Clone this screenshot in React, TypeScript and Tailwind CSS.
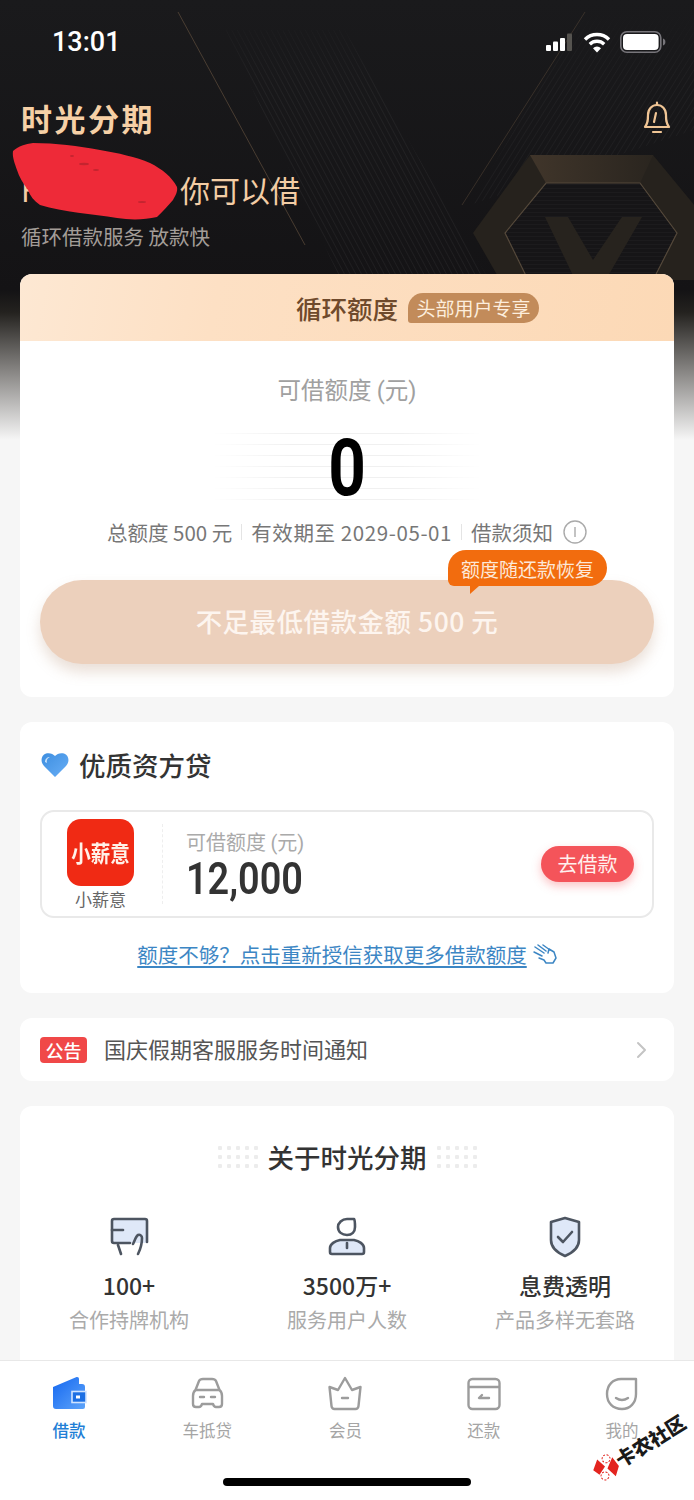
import React from "react";

const cjk = "font-['Noto_Sans_CJK_SC','Noto_Sans',sans-serif]";
const din = "font-['Roboto','Noto_Sans_CJK_SC',sans-serif]";

const StatusIcons = () => (
  <div className="flex items-center gap-[9px]">
    <svg width="28" height="18" viewBox="0 0 28 18">
      <rect x="0" y="12" width="5" height="6" rx="1" fill="#fff" />
      <rect x="7" y="8.5" width="5" height="9.5" rx="1" fill="#fff" />
      <rect x="14" y="5" width="5" height="13" rx="1" fill="#fff" />
      <rect x="21" y="0.5" width="5" height="17.5" rx="1" fill="#55534f" />
    </svg>
    <svg width="28" height="21" viewBox="0 0 28 21" fill="none" stroke="#fff" strokeWidth="3.4" strokeLinecap="butt">
      <path d="M2 7.5a17 17 0 0 1 24 0" />
      <path d="M6.8 12.2a10.4 10.4 0 0 1 14.4 0" />
      <path d="M14 20.5l-4-4.2a5.6 5.6 0 0 1 8 0z" fill="#fff" stroke="none" />
    </svg>
    <svg width="46" height="22" viewBox="0 0 46 22">
      <rect x="0.8" y="0.8" width="40" height="20.4" rx="6" fill="none" stroke="#77757a" strokeWidth="1.6" />
      <rect x="3" y="3" width="35.6" height="16" rx="4" fill="#fff" />
      <path d="M43 7.5c1.5.5 2.4 1.9 2.4 3.5s-.9 3-2.400 3.500z" fill="#77757a" />
    </svg>
  </div>
);

// diagonal hatching and the embossed hexagon badge behind the greeting
const HeaderArt = () => (
  <svg className="absolute left-0 top-0" width="694" height="290" viewBox="0 0 694 290" fill="none">
    <defs>
      <pattern id="hatch" width="5" height="5" patternUnits="userSpaceOnUse" patternTransform="rotate(-28)">
        <line x1="0" y1="0" x2="0" y2="5" stroke="#ffffff" strokeOpacity="0.09" strokeWidth="1" />
      </pattern>
      <pattern id="hatch2" width="5" height="5" patternUnits="userSpaceOnUse" patternTransform="rotate(32)">
        <line x1="0" y1="0" x2="0" y2="5" stroke="#ffffff" strokeOpacity="0.07" strokeWidth="1" />
      </pattern>
      <pattern id="bars" width="6" height="4" patternUnits="userSpaceOnUse">
        <line x1="0" y1="0" x2="6" y2="0" stroke="#ffffff" strokeOpacity="0.05" strokeWidth="1" />
      </pattern>
      <linearGradient id="fadeTop" x1="0" y1="0" x2="0" y2="1">
        <stop offset="0" stopColor="#fff" stopOpacity="0" />
        <stop offset="0.3" stopColor="#fff" stopOpacity="1" />
        <stop offset="1" stopColor="#fff" stopOpacity="1" />
      </linearGradient>
      <mask id="fade">
        <rect width="694" height="290" fill="url(#fadeTop)" />
      </mask>
      <linearGradient id="facet" x1="0" y1="0" x2="1" y2="0">
        <stop offset="0" stopColor="#40352a" />
        <stop offset="1" stopColor="#2a251f" />
      </linearGradient>
    </defs>
    <g mask="url(#fade)">
      <polygon points="225,30 345,30 495,290 345,290" fill="url(#hatch)" />
      <polygon points="585,10 694,10 694,130 470,205" fill="url(#hatch2)" />
    </g>
    <line x1="178" y1="12" x2="305" y2="245" stroke="#6a5642" strokeOpacity="0.6" />
    <line x1="585" y1="12" x2="462" y2="205" stroke="#6a5642" strokeOpacity="0.4" />
    <path d="M530 155H653L705 218L694 280H500L473 233z" fill="#26221d" />
    <path d="M530 155H653L640 183H546z" fill="url(#facet)" />
    <path d="M546 183H640L677 233L648 290H533L505 233z" fill="#161517" stroke="#54483a" strokeWidth="1.2" />
    <path d="M546 183H640L677 233L648 290H533L505 233z" fill="url(#bars)" />
    <path d="M545 217H568L593 260L622 217H642L600 290H580z" fill="#27231e" />
  </svg>
);

const Scribble = () => (
  <svg className="absolute left-[12px] top-[-30px]" width="172" height="84" viewBox="0 0 172 84">
    <path
      d="M1 11 C7 6 13 4 21 3 C44 3 66 6 88 10 C106 13 124 17 138 23 C150 29 160 37 165 47 C166 52 163 56 161 60 C156 66 151 71 145 77 C132 80 118 80 105 78 C80 74 52 72 28 65 C22 61 18 56 16 50 C11 43 7 37 5 30 C3 24 0 17 1 11z"
      fill="#ee2a38"
    />
    <g fill="#b3222c" opacity="0.7">
      <ellipse cx="72" cy="24" rx="5" ry="1.200" />
      <ellipse cx="84" cy="30" rx="3" ry="1" />
      <ellipse cx="60" cy="16" rx="2" ry="1" />
      <ellipse cx="130" cy="62" rx="4" ry="1" />
    </g>
  </svg>
);

const WalletIcon = () => (
  <svg width="36" height="36" viewBox="0 0 36 36">
    <defs>
      <linearGradient id="wallet" x1="0" y1="0" x2="1" y2="1">
        <stop offset="0" stopColor="#1467f0" />
        <stop offset="1" stopColor="#5ea4fa" />
      </linearGradient>
    </defs>
    <path d="M2 11 L25 1.200 C27 .6 28 1.500 28 3 V8 H31 A3 3 0 0 1 34 11 V31 A2 2 0 0 1 32 33 H5 A3 3 0 0 1 2 30z" fill="url(#wallet)" />
    <rect x="21" y="15.500" width="14" height="11" fill="#1c6fe4" stroke="#cfe3ff" strokeWidth="1.600" />
    <rect x="25" y="19.500" width="4" height="3" fill="#fff" />
  </svg>
);

const stroke = { fill: "none", stroke: "#9c9c9c", strokeWidth: 2.4, strokeLinecap: "round", strokeLinejoin: "round" } as const;

const CarIcon = () => (
  <svg width="36" height="36" viewBox="0 0 36 36" {...stroke}>
    <path d="M6.500 14 L10 5 Q11 3 14 3 H23 Q26 3 27 5 L30.500 14 Q33 16 33 20 V28 Q33 31 30 31 H27 Q25 31 24 28 H13 Q12 31 10 31 H7 Q4 31 4 28 V20 Q4 16 6.500 14z" />
    <path d="M7 14 H30" />
    <path d="M11 21 H15 M22 21 H26" />
  </svg>
);

const BasketIcon = () => (
  <svg width="36" height="36" viewBox="0 0 36 36" {...stroke}>
    <path d="M2.500 11 L11 14 L18 2 L25 14 L33.500 11 L31.500 30 A3 3 0 0 1 28.500 33 H7.500 A3 3 0 0 1 4.500 30z" />
    <path d="M15 22 h6" />
  </svg>
);

const RepayIcon = () => (
  <svg width="36" height="36" viewBox="0 0 36 36" {...stroke}>
    <rect x="2.500" y="3" width="31" height="30" rx="4" />
    <path d="M3 11 h30" />
    <path d="M16 19 l-3 3 h10" />
  </svg>
);

const MineIcon = () => (
  <svg width="36" height="36" viewBox="0 0 36 36" {...stroke}>
    <path d="M17 3 H32 V18 C32 27 26 33 18 33 C9 33 3 27 3 18 C3 9 9 3 17 3z" />
    <path d="M12 22 q6 4 12 0" />
  </svg>
);

const tabs = [
  { label: "借款", icon: <WalletIcon />, active: true },
  { label: "车抵贷", icon: <CarIcon /> },
  { label: "会员", icon: <BasketIcon /> },
  { label: "还款", icon: <RepayIcon /> },
  { label: "我的", icon: <MineIcon /> },
];

const aboutLine = { fill: "none", stroke: "#4d5561", strokeWidth: 2.6, strokeLinecap: "round", strokeLinejoin: "round" } as const;

const BankIcon = () => (
  <svg width="40" height="42" viewBox="0 0 40 42">
    <path d="M4 3H37V27H4z" fill="#dfe8f8" />
    <g {...aboutLine}>
      <path d="M21 27 H5 A2 2 0 0 1 3 25 V5 A2 2 0 0 1 5 3 H36 A2 2 0 0 1 38 5 V26" />
      <path d="M3 14 H14" />
      <path d="M9 29 L12 38" />
      <path d="M24 28 C26 24 27 20 29 19 C31 18 33 20 33 22 C33 28 32 32 29 38" />
    </g>
  </svg>
);

const UserIcon = () => (
  <svg width="38" height="40" viewBox="0 0 38 40">
    <path d="M2 36 V30 C2 25 8 23 14 22 H24 C30 23 36 25 36 30 V37 H2z" fill="#dfe8f8" />
    <g {...aboutLine}>
      <path d="M19 2 C14 2 10 6 10 10 C10 15 14 18 19 18 C24 18 27 15 27 10 C27 6 27 3 26 2z" />
      <path d="M12 23 C7 24 2 27 2 31 V35 A2 2 0 0 0 4 37 H34 A2 2 0 0 0 36 35 V31 C36 27 31 24 26 23z" />
      <path d="M19 26 V31" />
    </g>
  </svg>
);

const ShieldIcon = () => (
  <svg width="34" height="42" viewBox="0 0 34 42">
    <path d="M17 2 L31 6 V24 C31 32 24 37 17 40 C10 37 3 32 3 24 V6z" fill="#dfe8f8" />
    <g {...aboutLine}>
      <path d="M17 2 L31 6 V24 C31 32 24 37 17 40 C10 37 3 32 3 24 V6z" />
      <path d="M10 21 L15 26 L24 16" />
    </g>
  </svg>
);

const HandIcon = () => (
  <svg width="24" height="20" viewBox="0 0 24 20" fill="none" stroke="#3c86c4" strokeWidth="1.500" strokeLinecap="round" strokeLinejoin="round">
    <path d="M2 3 L11 9 M1 8 L9 12 M5 1 L13 7 M6 14 L11 16 L13 19 H20 L23 14 L21 8 L16 5 L15 9" />
    <path d="M10 1 L17 6" />
  </svg>
);

const DotCluster = () => (
  <div className="grid grid-cols-5 gap-[5px]">
    {Array.from({ length: 15 }).map((_, i) => (
      <span key={i} className="h-[4px] w-[4px] rounded-[1px] bg-[#ececec]" />
    ))}
  </div>
);

const facts = [
  { icon: <BankIcon />, value: "100+", label: "合作持牌机构" },
  { icon: <UserIcon />, value: "3500万+", label: "服务用户人数" },
  { icon: <ShieldIcon />, value: "息费透明", label: "产品多样无套路" },
];

export default function App() {
  return (
    <div className={`relative flex h-[1500px] w-[694px] flex-col overflow-hidden bg-[#f6f6f6] ${cjk}`}>
      {/* dark backdrop that fades out behind the first card */}
      <div className="absolute left-0 top-0 h-[440px] w-full bg-[linear-gradient(180deg,#1a1a1c_0%,#141315_66%,#24221f_71%,#8c8a88_85%,#f6f6f6_100%)]">
        <HeaderArt />
      </div>

      <div className="relative min-h-0 flex-1">
        <div className={`flex h-[82px] items-center justify-between pl-[52px] pr-[28px] pt-[2px] ${din}`}>
          <span className="text-[27px] font-medium text-white">13:01</span>
          <StatusIcons />
        </div>

        <div className="mt-[16px] flex h-[40px] items-center justify-between pl-[21px] pr-[22px]">
          <span className="text-[31px] font-bold leading-[40px] tracking-[2.500px] text-[#f6d0a6]">时光分期</span>
          <svg width="30" height="34" viewBox="0 0 30 34" fill="none" stroke="#f0c595" strokeWidth="2.200" strokeLinecap="round" strokeLinejoin="round">
            <path d="M3 26 C6 22 6 19 6 14 C6 8 10 4 15 4 C20 4 24 8 24 14 C24 19 24 22 27 26z" />
            <path d="M15 1.500 V4 M11 31 H19 M14 12 L12 21" />
          </svg>
        </div>

        <div className="relative mt-[32px] flex h-[40px] items-center pl-[21px] text-[30px] leading-[40px] text-[#f3cda5]">
          <span className="w-[159px] pb-[2px]">H</span>
          <span className="pb-[2px]">你可以借</span>
          <Scribble />
        </div>

        <p className="mt-[12px] h-[28px] pl-[21px] text-[20.500px] leading-[28px] text-[#a39d98]">循环借款服务 放款快</p>

        <section className="mx-5 mt-[24px] overflow-hidden rounded-[12px] bg-white">
          <div className="flex h-[67px] items-center gap-[10px] bg-[linear-gradient(100deg,#fde8d3_0%,#fde0c4_30%,#fcd9b6_100%)] pl-[276px]">
            <h2 className="text-[25.500px] font-medium leading-[34px] text-[#6f4a2c]">循环额度</h2>
            <span className="flex h-[30px] w-[131px] items-center justify-center rounded-[15px] rounded-bl-[3px] bg-[#c28b5a] text-[19px] leading-none text-[#fdeedd]">
              头部用户专享
            </span>
          </div>

          <div className="flex flex-col items-center pb-[33px]">
            <p className="mt-[33px] h-[30px] text-[23.500px] leading-[30px] text-[#a0a0a0]">
              可借额度 <span className={din}>(元)</span>
            </p>
            <div className="relative mt-[29px] flex h-[70px] w-[270px] items-center justify-center">
              <div className="absolute inset-0 bg-[repeating-linear-gradient(180deg,#f0f0f0_0,#f0f0f0_1px,transparent_1px,transparent_11px)] [mask-image:linear-gradient(90deg,transparent,#000_30%,#000_70%,transparent)]" />
              <span className={`relative origin-center scale-x-[0.82] text-[80px] font-bold leading-none text-black ${din}`}>0</span>
            </div>
            <div className="mt-[16px] flex h-[28px] items-center pb-[2px] text-[20.500px] leading-[28px] text-[#777]">
              <span>总额度 500 元</span>
              <span className="mx-[9px] h-[16px] w-px bg-[#e4e4e4]" />
              <span className="tracking-[0.6px]">有效期至 2029-05-01</span>
              <span className="mx-[9px] h-[16px] w-px bg-[#e4e4e4]" />
              <span>借款须知</span>
              <svg className="ml-[10px]" width="24" height="24" viewBox="0 0 24 24" fill="none" stroke="#aaa" strokeWidth="1.400">
                <circle cx="12" cy="12" r="11" />
                <path d="M12 7v10" />
              </svg>
            </div>
            <div className="relative mt-[33px] flex h-[84px] w-[614px] items-center justify-center rounded-full bg-[#ecd0bc] text-[26.500px] font-medium tracking-[0.5px] text-[#fdf5ef] shadow-[0_8px_14px_rgba(180,140,110,0.28)]">
              <span className="pb-[2px]">不足最低借款金额 500 元</span>
              <div className="absolute left-[408px] top-[-30px] flex h-[36px] w-[159px] items-center justify-center rounded-[18px] rounded-bl-[6px] bg-[#f26c0e] text-[19px] font-normal leading-none tracking-normal text-[#fde8d8]">
                额度随还款恢复
                <span className="absolute left-[22px] top-[36px] h-0 w-0 border-r-[9px] border-t-[8px] border-r-transparent border-t-[#f26c0e]" />
              </div>
            </div>
          </div>
        </section>

        <section className="mx-5 mt-[25px] rounded-[12px] bg-white px-5 pb-[25px]">
          <div className="flex h-[88px] items-center gap-[10px] pl-[1px] pb-[2px]">
            <svg width="28" height="26" viewBox="0 0 28 26">
              <defs>
                <linearGradient id="heart" x1="0" y1="0" x2="1" y2="1">
                  <stop offset="0" stopColor="#3d8ee0" />
                  <stop offset="1" stopColor="#68aef6" />
                </linearGradient>
              </defs>
              <path d="M14 25 L3 14 C-1 10 0 3 5 1.500 C9 .5 12 2 14 4 C16 2 19 .5 23 1.500 C28 3 29 10 25 14z" fill="url(#heart)" />
              <path d="M4 10 C4 7 6 5 9 5 C6 6.500 5.500 8 6 11z" fill="#c8e2fb" />
            </svg>
            <h2 className="text-[26.500px] font-medium leading-[36px] text-[#333]">优质资方贷</h2>
          </div>

          <div className="flex h-[108px] items-center rounded-[14px] border-2 border-[#e9e9e9] pl-[25px] pr-[18px]">
            <div className="flex w-[67px] flex-col items-center pt-[2px]">
              <div className="flex h-[67px] w-[67px] items-center justify-center rounded-[14px] bg-[#f02a14] text-[23px] font-bold leading-none text-[#fff1e8]">
                <span className="scale-x-[0.85] whitespace-nowrap">小薪意</span>
              </div>
              <span className="mt-[1px] text-[17px] leading-[24px] text-[#666]">小薪意</span>
            </div>
            <span className="ml-[28px] h-[80px] border-l border-dashed border-[#eeeeee]" />
            <div className="ml-[23px] flex flex-col pt-[3px]">
              <span className="text-[20px] leading-[26px] text-[#aaa]">
                可借额度 <span className={din}>(元)</span>
              </span>
              <span className={`origin-left scale-x-[0.86] text-[44px] font-semibold leading-[46px] text-[#333] ${din}`}>12,000</span>
            </div>
            <button className="ml-auto flex h-[36px] w-[93px] items-center justify-center rounded-full bg-[#f4545a] text-[20px] leading-none text-[#fff0ee] shadow-[0_4px_10px_rgba(244,84,90,0.35)]">
              去借款
            </button>
          </div>

          <div className="mt-[22px] flex h-[28px] items-center justify-center gap-[6px] text-[20.500px] leading-[28px] text-[#3c86c4]">
            <span className="underline underline-offset-[3px]">额度不够？点击重新授信获取更多借款额度</span>
            <HandIcon />
          </div>
        </section>

        <section className="mx-5 mt-[25px] flex h-[63px] items-center rounded-[12px] bg-white pl-5 pr-[26px]">
          <span className="flex h-[26px] w-[47px] items-center justify-center rounded-[4px] bg-[#f04848] text-[18px] font-medium leading-none text-white">公告</span>
          <span className="mb-[4px] ml-[17px] text-[22px] leading-[30px] text-[#555]">国庆假期客服服务时间通知</span>
          <svg className="ml-auto" width="12" height="18" viewBox="0 0 12 18" fill="none" stroke="#c4c4c4" strokeWidth="2" strokeLinecap="round" strokeLinejoin="round">
            <path d="M2 2l7 7-7 7" />
          </svg>
        </section>

        <section className="mx-5 mt-[25px] rounded-[12px] bg-white pb-[40px]">
          <div className="flex h-[104px] items-center justify-center gap-[10px] pb-[2px]">
            <DotCluster />
            <h2 className="text-[26.500px] font-medium leading-[36px] text-[#333]">关于时光分期</h2>
            <DotCluster />
          </div>
          <div className="mt-[5px] grid grid-cols-3">
            {facts.map((f) => (
              <div key={f.label} className="flex flex-col items-center">
                <div className="flex h-[44px] items-center">{f.icon}</div>
                <span className="mt-[11px] text-[23px] font-medium leading-[30px] text-[#333]">{f.value}</span>
                <span className="mt-[6px] text-[20px] leading-[28px] text-[#aaa]">{f.label}</span>
              </div>
            ))}
          </div>
        </section>
      </div>

      <nav className="relative h-[140px] shrink-0 border-t border-[#e8e8e8] bg-white">
        <div className="grid grid-cols-5 pr-[3px] pt-[15px]">
          {tabs.map((t) => (
            <div key={t.label} className="flex flex-col items-center">
              <div className="h-[36px]">{t.icon}</div>
              <span className={`mt-[6px] text-[16.500px] leading-[24px] ${t.active ? "font-medium text-[#1f7fd6]" : "text-[#a5a5a5]"}`}>{t.label}</span>
            </div>
          ))}
        </div>
        <div className="absolute bottom-[14px] left-[223px] h-[8px] w-[248px] rounded-full bg-black" />
      </nav>

      {/* forum watermark in the lower right corner */}
      <div className="absolute left-[587px] top-[1434px] flex h-[26px] w-[106px] -rotate-[32deg] items-center whitespace-nowrap">
        <svg className="shrink-0" width="26" height="26" viewBox="0 0 26 26">
          <path d="M1 8 L10 1 L13 11 L4 15z M14 14 L24 7 L25 18 L17 25z" fill="#e3241f" />
          <circle cx="8" cy="19" r="4" fill="#fff" stroke="#e3241f" strokeWidth="1" strokeDasharray="2 1.500" />
          <circle cx="18" cy="5" r="4" fill="#fff" stroke="#e3241f" strokeWidth="1" strokeDasharray="2 1.500" />
        </svg>
        <span className="text-[19.500px] font-black leading-none text-[#1a1a1a]">卡农社区</span>
      </div>
    </div>
  );
}
